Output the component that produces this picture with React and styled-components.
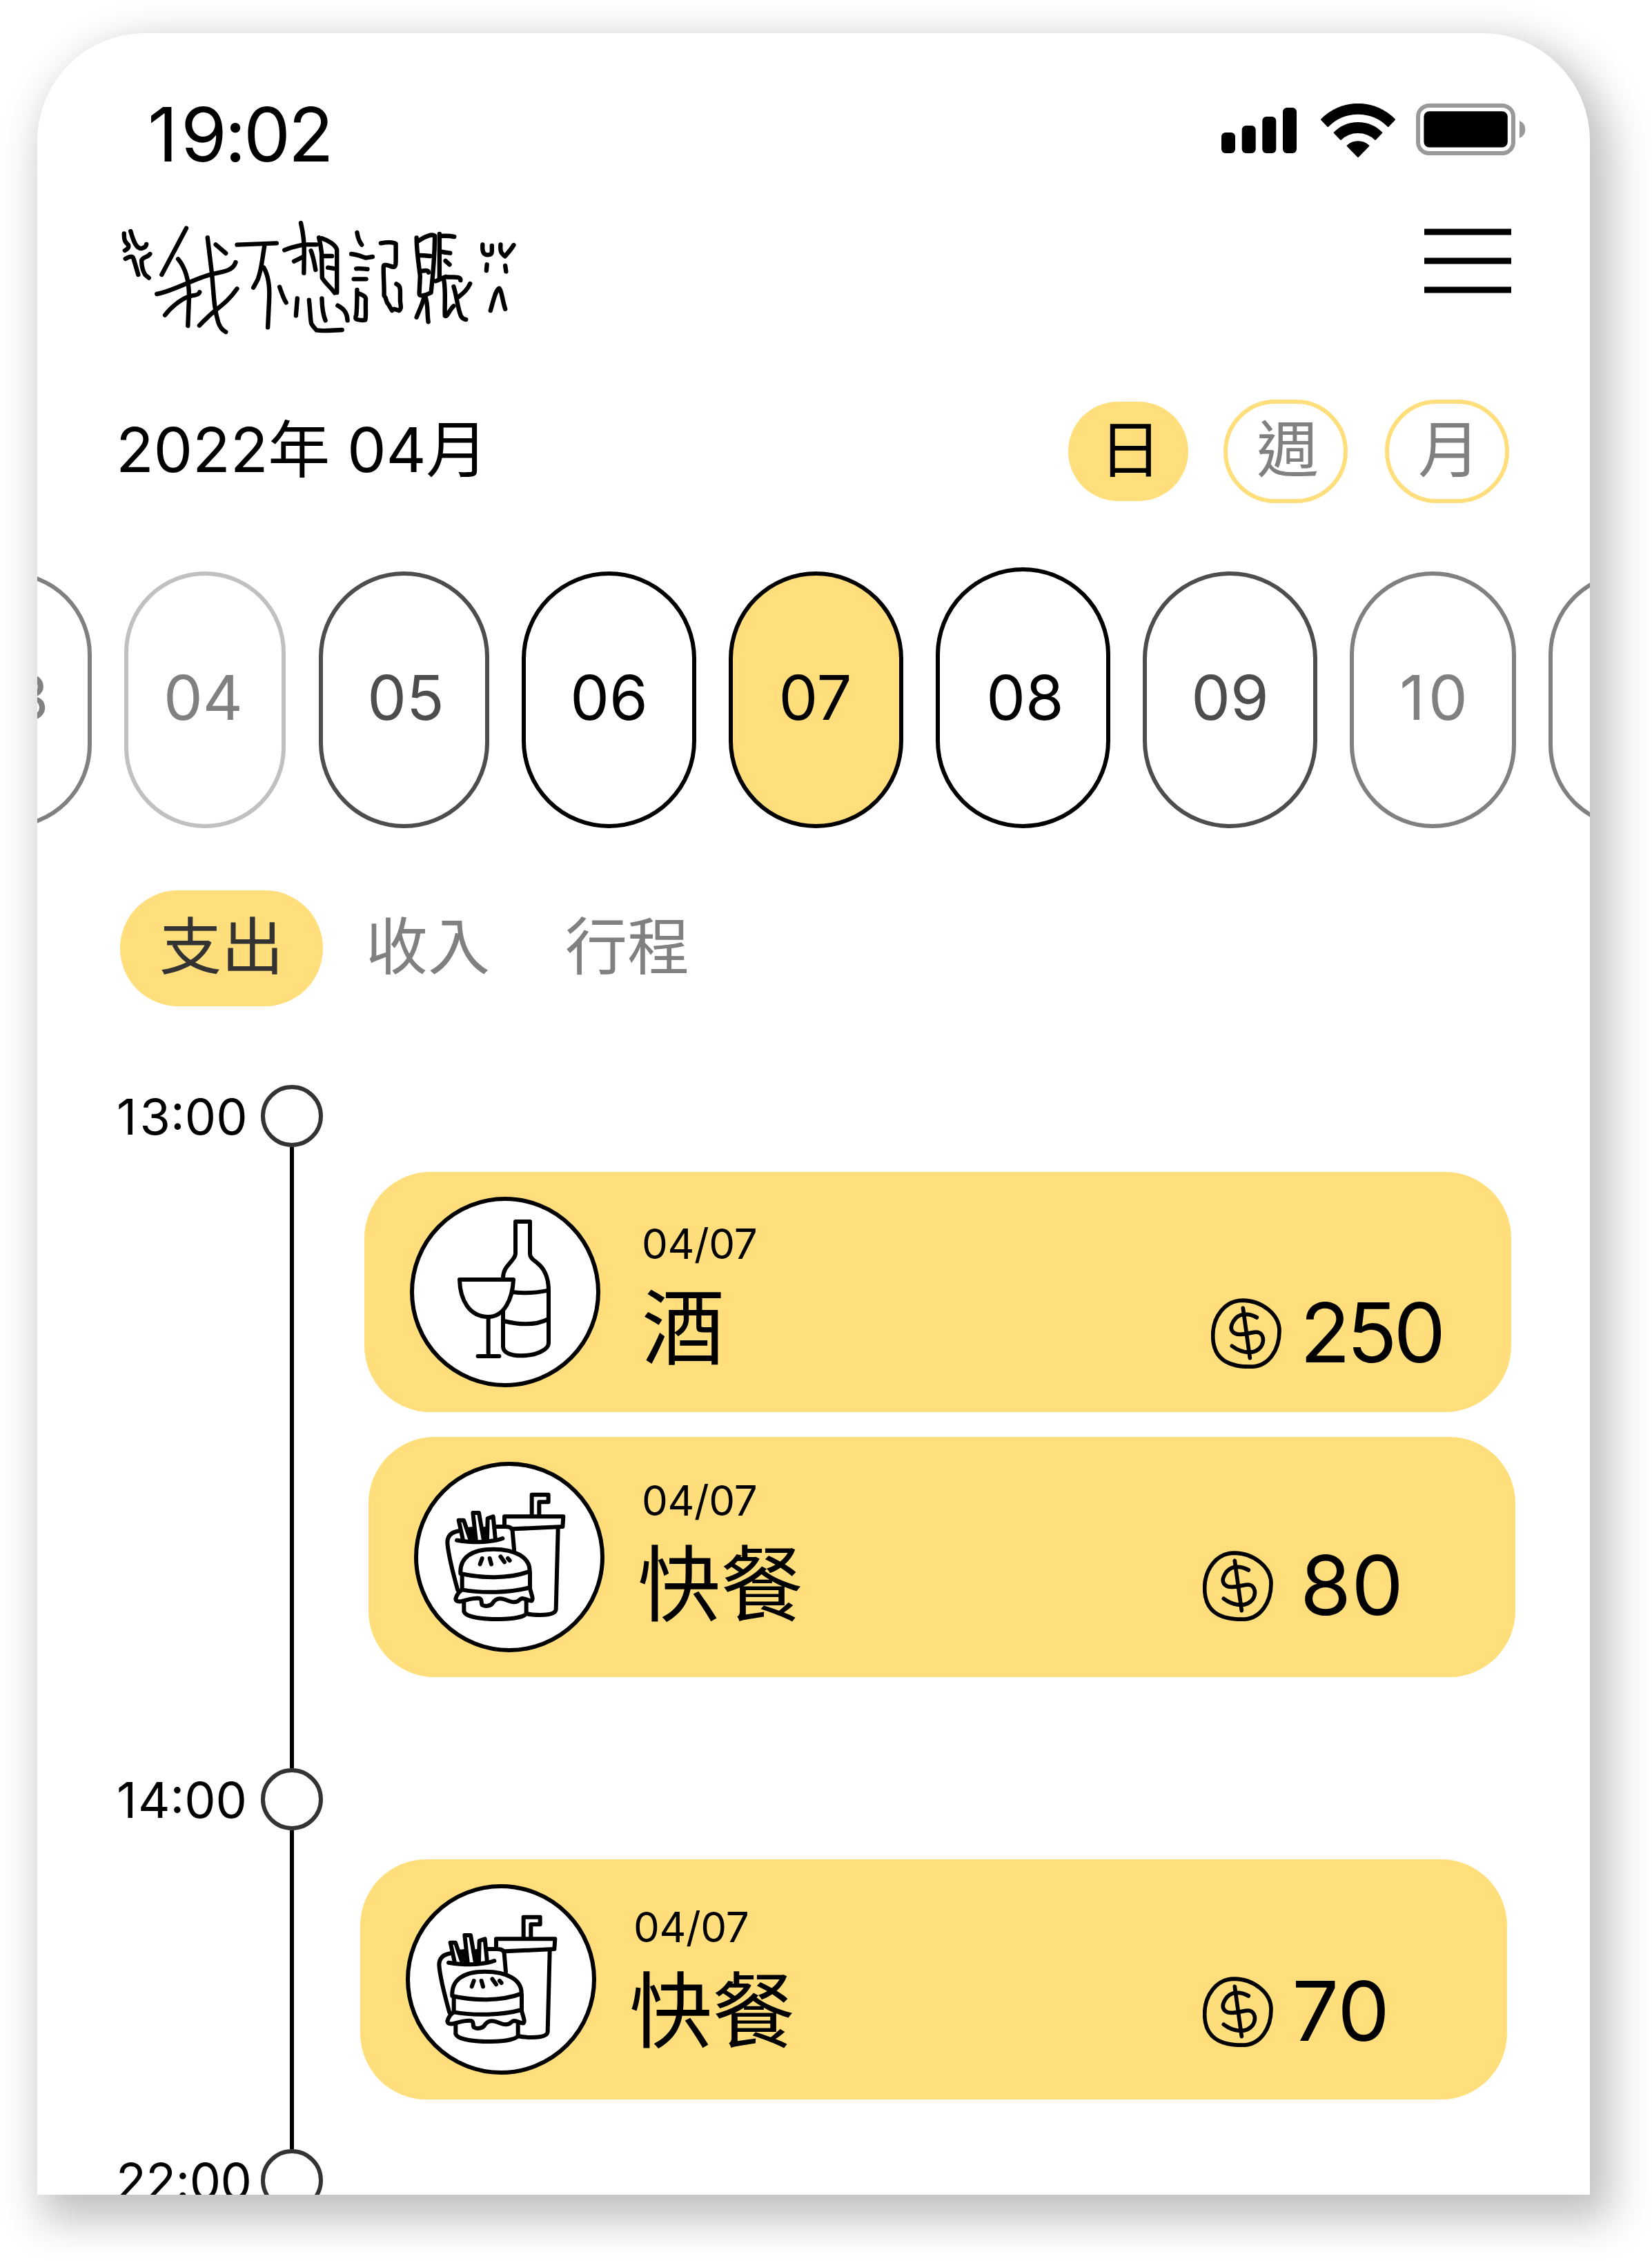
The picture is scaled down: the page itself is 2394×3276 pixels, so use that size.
import React from "react";
import styled, { createGlobalStyle } from "styled-components";

const YELLOW = "#ffde7b";
const GREY = "#808080";

const GlobalStyle = createGlobalStyle`
  *, *::before, *::after { box-sizing: border-box; }
  body {
    margin: 0;
    background: #fff;
    color: #000;
    font-family: Inter, "Noto Sans CJK TC", sans-serif;
  }
`;

const Page = styled.div`
  display: flow-root;
  height: 3276px;
`;

const Screen = styled.main`
  display: flex;
  flex-direction: column;
  width: 2250px;
  height: 3132px;
  margin: 48px 0 0 54px;
  border-radius: 156px 156px 0 0;
  background: #fff;
  overflow: hidden;
  box-shadow: 18px 24px 60px 12px rgba(0, 0, 0, 0.25);
`;

const StatusBar = styled.header`
  display: flex;
  justify-content: space-between;
  align-items: flex-start;
  flex: none;
  height: 207px;
  padding: 87px 92px 0 160px;
`;

const Clock = styled.time`
  font-size: 108px;
  line-height: 120px;
  letter-spacing: -3.5px;
`;

const LeadDigit = styled.span`
  letter-spacing: ${(p) => p.$space}px;
`;

const StatusIcons = styled.svg`
  width: 442px;
  height: 78px;
  margin-top: 15px;
`;

const TitleBar = styled.div`
  display: flex;
  justify-content: space-between;
  align-items: flex-start;
  flex: none;
  height: 200px;
  margin-top: 45px;
  padding: 0 114px 0 106px;
`;

const LogoArt = styled.svg`
  width: 620px;
  height: 200px;
  fill: none;
  stroke: #000;
  stroke-width: 6.4px;
  stroke-linecap: round;
  stroke-linejoin: round;

  path { vector-effect: non-scaling-stroke; }
`;

const MenuArt = styled.svg`
  width: 126px;
  height: 94px;
  margin-top: 31px;
`;

const PeriodRow = styled.div`
  display: flex;
  justify-content: space-between;
  flex: none;
  height: 150px;
  margin-top: 79px;
  padding: 0 117px 0 114px;
`;

const Month = styled.h1`
  margin: 0;
  font-size: 90px;
  font-weight: 400;
  line-height: 145px;
  letter-spacing: -0.3px;
`;

const PeriodSwitch = styled.div`
  display: flex;
  align-items: center;
`;

const Period = styled.button`
  flex: none;
  width: ${(p) => (p.$active ? 174 : 180)}px;
  height: ${(p) => (p.$active ? 144 : 150)}px;
  margin: 0 0 0 ${(p) => p.$gap || 0}px;
  padding: 0 0 5px ${(p) => p.$nudge || 0}px;
  border: ${(p) => (p.$active ? "none" : `6px solid ${YELLOW}`)};
  border-radius: 75px;
  background: ${(p) => (p.$active ? YELLOW : "transparent")};
  color: ${(p) => (p.$active ? "#000" : GREY)};
  font: inherit;
  font-size: 90px;
  line-height: 132px;
`;

const DayStrip = styled.div`
  display: flex;
  align-items: flex-end;
  flex: none;
  height: 378px;
  margin: 93px 0 0 -162px;
`;

const Day = styled.button`
  display: flex;
  justify-content: center;
  align-items: center;
  flex: none;
  width: ${(p) => p.$width}px;
  height: ${(p) => (p.$tall ? 378 : 372)}px;
  margin: 0 ${(p) => p.$gap}px 0 0;
  padding: 0 ${(p) => Math.max(0, -p.$nudge)}px ${(p) => (p.$tall ? 0 : 6)}px
    ${(p) => Math.max(0, p.$nudge)}px;
  border: 6px solid ${(p) => p.$line};
  border-radius: 130px;
  background: ${(p) => (p.$active ? YELLOW : "transparent")};
  color: ${(p) => p.$ink};
  font: inherit;
  font-size: 90px;
  line-height: 120px;
`;

const Tabs = styled.nav`
  display: flex;
  flex: none;
  gap: 15px;
  height: 168px;
  margin: 90px 0 0 120px;
`;

const Tab = styled.button`
  flex: none;
  width: ${(p) => (p.$active ? 294 : 274)}px;
  padding: 0 0 5px;
  border: 0;
  border-radius: 84px;
  background: ${(p) => (p.$active ? YELLOW : "transparent")};
  color: ${(p) => (p.$active ? "#333" : GREY)};
  font: inherit;
  font-size: 90px;
  line-height: 162px;
  white-space: nowrap;
`;

const Timeline = styled.section`
  margin: 114px 0 0 114px;
`;

const Slot = styled.div`
  display: flex;
  height: ${(p) => p.$height}px;
`;

const SlotTime = styled.time`
  flex: none;
  width: 210px;
  padding-left: ${(p) => p.$inset || 0}px;
  font-size: 72px;
  line-height: 91px;
  letter-spacing: ${(p) => p.$tracking || 0}px;
`;

const Rail = styled.div`
  display: flex;
  flex-direction: column;
  align-items: center;
  flex: none;
  width: 90px;

  &::before {
    content: "";
    flex: none;
    width: 90px;
    height: 90px;
    border: 6px solid #333;
    border-radius: 50%;
  }

  &::after {
    content: "";
    flex: 1;
    width: 6px;
    background: #000;
  }
`;

const Entries = styled.div`
  display: flex;
  flex-direction: column;
  gap: 36px;
  padding-top: ${(p) => p.$top}px;
`;

const EntryCard = styled.article`
  display: flex;
  align-items: flex-start;
  flex: none;
  width: 1662px;
  height: 348px;
  margin-left: ${(p) => p.$indent}px;
  padding: 36px ${(p) => p.$right}px 0 66px;
  border-radius: 96px;
  background: ${YELLOW};
`;

const Disc = styled.svg`
  flex: none;
  width: 276px;
  height: 276px;
  fill: none;
  stroke: #000;
  stroke-width: 18px;
  stroke-linecap: round;
  stroke-linejoin: round;
`;

const EntryText = styled.div`
  flex: 1;
  margin: ${(p) => p.$top}px 0 0 ${(p) => p.$left}px;
`;

const EntryDate = styled.div`
  padding-left: ${(p) => p.$inset}px;
  font-size: 60px;
  line-height: 72px;
  letter-spacing: -0.3px;
`;

const EntryName = styled.h2`
  margin: 15px 0 0;
  font-size: 120px;
  font-weight: 400;
  line-height: 144px;
`;

const Amount = styled.div`
  display: flex;
  align-items: flex-start;
  gap: ${(p) => p.$gap}px;
  margin-top: ${(p) => p.$top}px;
  font-size: 120px;
  line-height: 100px;
  letter-spacing: ${(p) => p.$tracking || 0}px;
`;

const CoinArt = styled.svg`
  flex: none;
  width: 102px;
  height: 102px;
  fill: none;
  stroke: #000;
  stroke-width: 17px;
  stroke-linecap: round;
  stroke-linejoin: round;
`;

function DeviceStatus() {
  return (
    <StatusIcons viewBox="1770 150 442 78">
      <rect x="1770" y="192" width="20" height="30" rx="6" />
      <rect x="1799.7" y="182" width="20" height="40" rx="6" />
      <rect x="1829.3" y="169" width="20" height="53" rx="6" />
      <rect x="1859" y="156" width="20" height="66" rx="6" />
      <g stroke="#000" strokeWidth="2" strokeLinejoin="round">
        <path d="M1915 173.2 A74 74 0 0 1 2021 173.2 L2011.6 183 A61 61 0 0 0 1924.4 183Z" />
        <path d="M1933.7 192.2 A48.4 48.4 0 0 1 2002.3 192.2 L1993 202 A36 36 0 0 0 1943 202Z" />
        <path d="M1952.6 211.2 A23.2 23.2 0 0 1 1983.4 211.2 L1968 227Z" />
      </g>
      <rect x="2055" y="153" width="138" height="69" rx="16" fill="none" stroke="#999" strokeWidth="6" />
      <rect x="2063.4" y="161.2" width="121.4" height="52.4" rx="8" />
      <path d="M2202 175 A13.5 13.5 0 0 1 2202 200Z" fill="#999" />
    </StatusIcons>
  );
}

const LOGO_STROKES = [
  "M50 115C50 150 55 152 66 165Q70 178 53 189",
  "M74 105C85 150 95 182 115 180C125 176 131 172 132 162",
  "M55 225C70 215 82 210 85 225L102 294",
  "M145 204C135 222 115 215 114 235C115 260 122 285 128 295L141 308",
  "M278 92L188 294",
  "M248 226C275 265 290 320 288 400L284 516",
  "M170 378C230 365 300 315 370 292C420 280 450 275 459 240",
  "M200 470C225 430 270 390 300 385C315 383 325 378 327 370",
  "M356 133L372 290C380 400 380 440 395 500C402 525 410 535 423 543",
  "M386 163L423 201",
  "M464 355C430 415 390 440 360 475Q340 497 326 515",
  "M464 164L609 157",
  "M566 160C555 230 555 270 540 315L524 350",
  "M562 263C575 290 585 330 582 400L577 523",
  "M620 347C628 375 635 400 644 415",
  "M698 69C706 110 711 150 710 200L709 287",
  "M638 187C660 175 690 168 710 163L755 163",
  "M673 236L705 217",
  "M735 190C745 220 748 250 752 273",
  "M764 133Q770 160 774 200L776 308C790 335 805 345 822 373",
  "M775 136C800 145 825 165 830 185V372",
  "M782 213H812",
  "M797 263L824 268",
  "M685 397L680 472",
  "M728 404C733 460 733 490 736 505C742 520 748 525 755 535C780 540 810 537 849 534",
  "M775 397C776 450 780 470 788 493",
  "M833 428C860 445 868 465 869 493",
  "M904 111C907 135 912 150 921 164",
  "M883 204C905 206 920 215 936 221L961 216",
  "M901 268Q910 266 942 270",
  "M892 313H937",
  "M904 360C904 400 904 440 901 470C896 480 898 487 905 489C915 492 925 493 934 491C938 470 934 440 936 400Q936 385 910 376",
  "M991 157C1015 152 1035 150 1046 160V230C1046 255 1044 262 1035 260C1020 255 1002 245 1001 258C1000 300 1004 340 1003 385C1015 400 1005 405 1020 425L1032 450L1040 443L1058 450C1068 440 1064 430 1062 410V370C1062 345 1058 340 1048 334",
  "M1122 133C1122 200 1132 260 1135 300L1132 375Q1132 385 1142 385Q1160 382 1175 372C1180 320 1188 220 1189 125Q1180 118 1165 125C1145 132 1138 140 1126 150",
  "M1130 210Q1150 210 1172 213",
  "M1143 278Q1165 272 1166 284",
  "M1150 388C1145 420 1135 440 1122 479",
  "M1155 392C1165 430 1160 460 1165 499",
  "M1206 117V310",
  "M1210 126Q1240 124 1260 129",
  "M1212 194Q1225 198 1245 200",
  "M1228 234L1243 250",
  "M1192 322C1210 315 1215 308 1228 303C1250 308 1285 298 1283 318",
  "M1222 315C1230 370 1224 420 1226 473C1235 480 1240 450 1258 430",
  "M1258 346C1270 390 1272 440 1285 475Q1292 488 1303 489",
  "M1318 333C1308 360 1295 372 1277 390",
  "M1364 163C1362 200 1370 208 1382 208C1402 208 1398 195 1398 168",
  "M1430 163C1428 195 1432 200 1446 214C1460 195 1468 185 1478 165",
  "M1380 250L1378 276",
  "M1447 255L1450 280",
  "M1393 450C1405 400 1412 360 1425 353C1435 365 1435 400 1447 443",
];

function Logo() {
  return (
    <LogoArt viewBox="0 0 1568 600" preserveAspectRatio="none">
      {LOGO_STROKES.map((d) => (
        <path key={d} d={d} />
      ))}
    </LogoArt>
  );
}

function MenuIcon() {
  return (
    <MenuArt viewBox="0 0 126 94" stroke="#000" strokeWidth="9">
      <path d="M0 5H126M0 47H126M0 89H126" />
    </MenuArt>
  );
}

function WineIcon() {
  return (
    <Disc viewBox="72 42 828 828">
      <circle cx="486" cy="456" r="405" fill="#fff" />
      <path d="M477 394C478 355 500 340 515 320C526 306 531 300 531 288V150H594V290C594 310 612 318 628 332C662 360 674 400 675 445V678C675 705 625 733 555 733C510 733 477 720 477 692V540" />
      <path d="M522 457Q590 466 675 449M480 582Q600 612 675 573" />
      <path d="M288 402H522C518 490 480 564 413 564C330 564 290 490 288 402Z" />
      <path d="M413 564V735M368 735H460" />
    </Disc>
  );
}

function FastFoodIcon() {
  return (
    <Disc viewBox="60 54 828 828">
      <circle cx="474" cy="468" r="405" fill="#fff" />
      <path d="M572 290V197H644V229H604V290" />
      <path d="M453 330V292H709L706 336L490 346" />
      <path d="M686 345L677 695Q676 719 610 720Q570 720 548 714" />
      <path d="M250 612C230 540 208 450 205 405C205 372 228 358 258 354M294 347L320 345M355 348L375 344M415 336H455Q487 336 488 355L495 435" />
      <path d="M246 395Q330 408 390 399Q425 395 445 387" />
      <path d="M272 390L254 308H276L303 388" />
      <path d="M329 392L316 276H342L362 390" />
      <path d="M378 388L380 300L404 292L413 385" />
      <path d="M308 350L320 388M368 350L370 388" />
      <path d="M262 540C258 470 310 434 405 434C500 434 565 470 563 530C470 565 350 560 262 540Z" />
      <path d="M356 474L347 499M389 474L396 499M436 466L453 490M468 474L476 483" />
      <path d="M269 545V610Q330 622 415 620Q500 618 564 600V535" />
      <path d="M266 612C250 625 243 640 241 650C243 665 262 662 275 658C300 652 320 645 345 648C358 652 350 668 356 676C375 686 395 678 402 668C412 652 425 645 445 650C465 655 480 664 495 664C520 664 515 650 530 648C548 648 560 660 572 658C580 650 570 630 564 605" />
      <path d="M277 662V705C285 730 360 738 430 738C500 738 547 725 548 712V655" />
    </Disc>
  );
}

function Coin() {
  return (
    <CoinArt viewBox="165 118 306 296" preserveAspectRatio="none">
      <path d="M303 127C385 128 462 185 462 255C462 330 420 406 335 406C240 406 173 375 173 275C173 195 225 127 303 127Z" />
      <path d="M364 199C330 180 285 178 262 215C240 250 260 272 295 270C330 268 350 258 368 261C395 268 397 300 382 322C360 352 305 355 256 319" />
      <path d="M304 160L334 369" />
    </CoinArt>
  );
}

const DAYS = [
  { id: 3, label: "03", width: 241, gap: 47, ink: GREY, line: GREY, nudge: 4 },
  { id: 4, label: "04", width: 234, gap: 48, ink: GREY, line: "#c0c0c0", nudge: -5 },
  { id: 5, label: "05", width: 247, gap: 47, ink: "#4d4d4d", line: "#4d4d4d", nudge: 5 },
  { id: 6, label: "06", width: 253, gap: 47, ink: "#000", line: "#000" },
  { id: 7, label: "07", width: 253, gap: 47, ink: "#000", line: "#000", active: true, nudge: -2 },
  { id: 8, label: "08", width: 253, gap: 47, ink: "#000", line: "#000", tall: true, nudge: 6 },
  { id: 9, label: "09", width: 253, gap: 47, ink: "#4d4d4d", line: "#4d4d4d" },
  {
    id: 10,
    label: (
      <span>
        <LeadDigit $space={5}>1</LeadDigit>0
      </span>
    ),
    width: 241,
    gap: 47,
    ink: GREY,
    line: GREY,
    nudge: 2,
  },
  { id: 11, label: "", width: 241, gap: 0, ink: GREY, line: GREY },
];

function Entry({ indent, icon, date, name, amount, text, money }) {
  return (
    <EntryCard $indent={indent} $right={money.right}>
      {icon}
      <EntryText $top={text.top} $left={text.left}>
        <EntryDate $inset={text.inset}>{date}</EntryDate>
        <EntryName>{name}</EntryName>
      </EntryText>
      <Amount $top={money.top} $gap={money.gap} $tracking={money.tracking}>
        <Coin />
        <span>{amount}</span>
      </Amount>
    </EntryCard>
  );
}

export default function App() {
  return (
    <Page>
      <GlobalStyle />
      <Screen>
        <StatusBar>
          <Clock>
            <LeadDigit $space={4}>1</LeadDigit>9:02
          </Clock>
          <DeviceStatus />
        </StatusBar>

        <TitleBar>
          <Logo />
          <MenuIcon />
        </TitleBar>

        <PeriodRow>
          <Month>2022年 04月</Month>
          <PeriodSwitch>
            <Period $active $nudge={6}>日</Period>
            <Period $gap={51} $nudge={6}>週</Period>
            <Period $gap={54} $nudge={6}>月</Period>
          </PeriodSwitch>
        </PeriodRow>

        <DayStrip>
          {DAYS.map((d) => (
            <Day
              key={d.id}
              $width={d.width}
              $gap={d.gap}
              $line={d.line}
              $ink={d.ink}
              $active={d.active}
              $tall={d.tall}
              $nudge={d.nudge || 0}
            >
              {d.label}
            </Day>
          ))}
        </DayStrip>

        <Tabs>
          <Tab $active>支出</Tab>
          <Tab>收入</Tab>
          <Tab>行程</Tab>
        </Tabs>

        <Timeline>
          <Slot $height={990}>
            <SlotTime $inset={1}>
              <LeadDigit $space={4.2}>1</LeadDigit>3:00
            </SlotTime>
            <Rail />
            <Entries $top={126}>
              <Entry
                indent={60}
                icon={<WineIcon />}
                date="04/07"
                name="酒"
                amount="250"
                text={{ top: 32, left: 60, inset: 0 }}
                money={{ top: 147, right: 100, gap: 27, tracking: -5.2 }}
              />
              <Entry
                indent={66}
                icon={<FastFoodIcon />}
                date="04/07"
                name="快餐"
                amount="80"
                text={{ top: 20, left: 48, inset: 6 }}
                money={{ top: 129, right: 162, gap: 39 }}
              />
            </Entries>
          </Slot>
          <Slot $height={552}>
            <SlotTime $inset={1}>
              <LeadDigit $space={1.6}>1</LeadDigit>4:00
            </SlotTime>
            <Rail />
            <Entries $top={132}>
              <Entry
                indent={54}
                icon={<FastFoodIcon />}
                date="04/07"
                name="快餐"
                amount="70"
                text={{ top: 26, left: 48, inset: 6 }}
                money={{ top: 134, right: 170, gap: 27 }}
              />
            </Entries>
          </Slot>
          <Slot $height={300}>
            <SlotTime $tracking={-0.6}>22:00</SlotTime>
            <Rail />
          </Slot>
        </Timeline>
      </Screen>
    </Page>
  );
}
